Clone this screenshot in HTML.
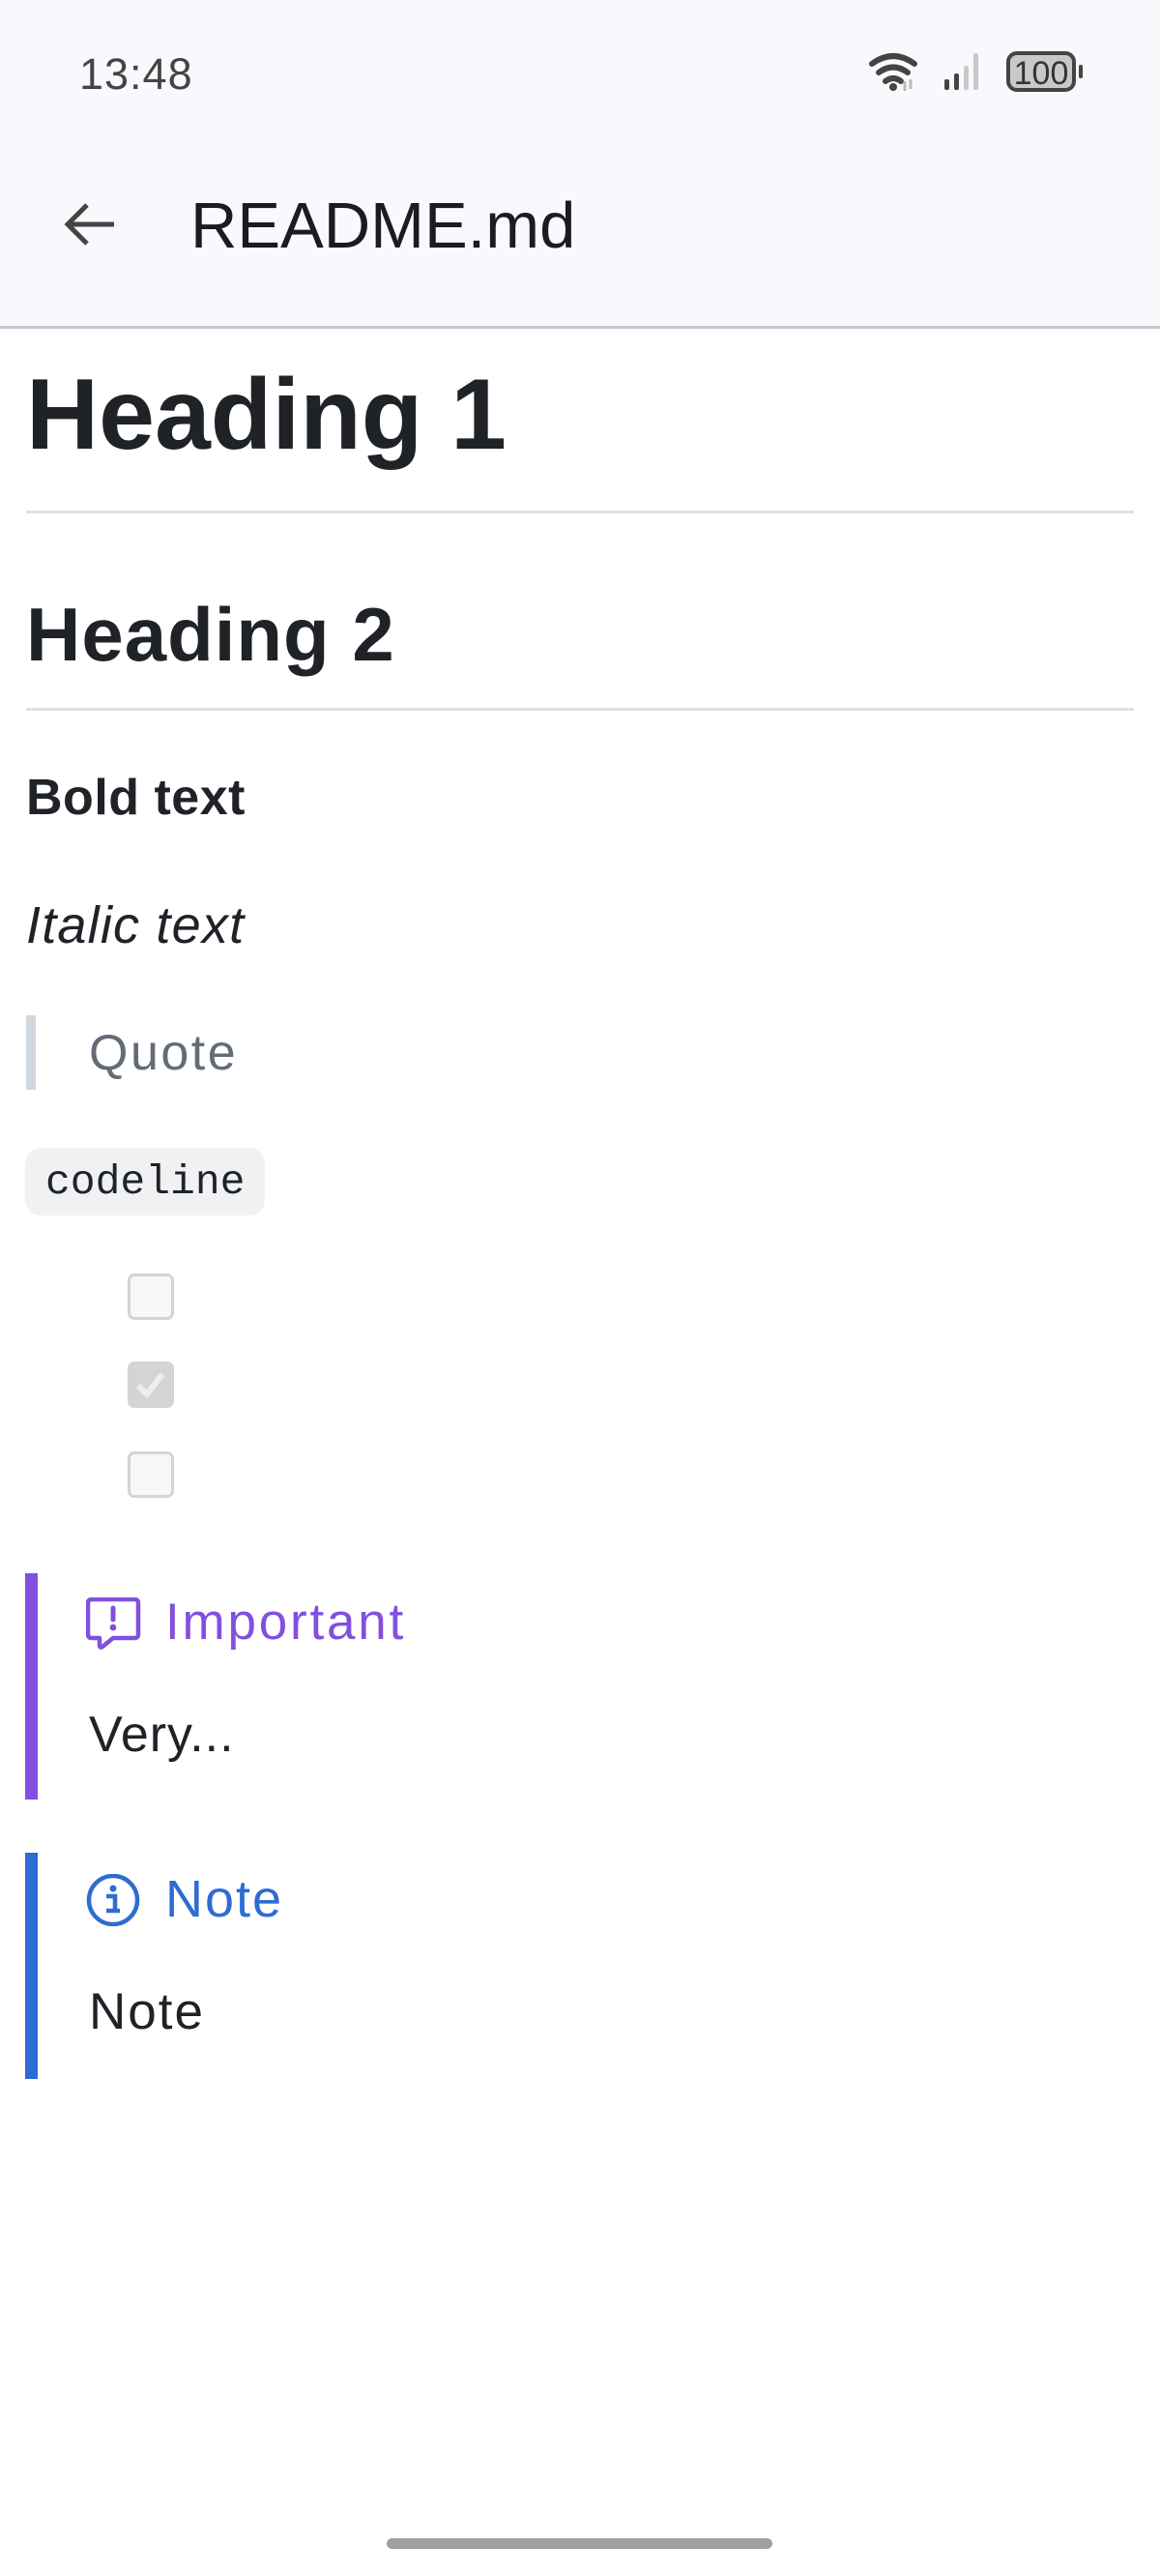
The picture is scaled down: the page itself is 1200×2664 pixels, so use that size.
<!DOCTYPE html>
<html><head><meta charset="utf-8"><style>
*{margin:0;padding:0;box-sizing:border-box}
body{width:1200px;height:2664px;background:#fff;position:relative;overflow:hidden;font-family:"Liberation Sans",sans-serif;color:#1f2328}
.a{position:absolute;line-height:1;white-space:nowrap}
.hr{position:absolute;left:27px;width:1146px;height:3px;background:#dfe2e5}
.cb{position:absolute;left:132px;width:48px;height:48px;border:3px solid #d4d4d4;background:#f7f7f7;border-radius:7px}
</style></head><body>
<div style="position:absolute;left:0;top:0;width:1200px;height:337px;background:#f9f8fd"></div>
<div style="position:absolute;left:0;top:337px;width:1200px;height:3px;background:#c5c4cc"></div>
<div class="a" style="left:82px;top:54px;font-size:45px;color:#444;letter-spacing:1px">13:48</div>
<svg style="position:absolute;left:896px;top:50px" width="230" height="48" viewBox="0 0 230 48">
<path d="M6 16 Q28 0 50 16" fill="none" stroke="#444" stroke-width="6" stroke-linecap="round"/>
<path d="M13 25 Q28 14 43 25" fill="none" stroke="#444" stroke-width="6" stroke-linecap="round"/>
<path d="M20 34 Q28 28 36 34" fill="none" stroke="#444" stroke-width="6" stroke-linecap="round"/>
<circle cx="28" cy="40" r="4" fill="#444"/>
<path d="M40 44 V34 M46 32 V42" stroke="#bbb" stroke-width="3"/>
<rect x="81" y="32" width="5" height="11" rx="2" fill="#444"/>
<rect x="91" y="26" width="5" height="17" rx="2" fill="#444"/>
<rect x="101" y="18" width="5" height="25" rx="2" fill="#c8c8c8"/>
<rect x="111" y="5" width="5" height="38" rx="2" fill="#c8c8c8"/>
<rect x="147" y="5" width="68" height="38" rx="9" fill="#c8c8c8" stroke="#444" stroke-width="4"/>
<rect x="220" y="17" width="4" height="14" rx="2" fill="#444"/>
<text x="181" y="37" text-anchor="middle" font-family="Liberation Sans" font-size="34" fill="#333">100</text>
</svg>
<svg style="position:absolute;left:62px;top:202px" width="60" height="60" viewBox="0 0 60 60">
<path d="M56 30 H8 M28 10 L8 30 L28 50" fill="none" stroke="#444" stroke-width="5"/>
</svg>
<div class="a" style="left:197px;top:200px;font-size:67px;color:#1c1b1f">README.md</div>

<div class="a" style="left:27px;top:377px;font-size:104px;font-weight:bold">Heading 1</div>
<div class="hr" style="top:528px"></div>
<div class="a" style="left:27px;top:617px;font-size:78px;font-weight:bold;letter-spacing:1px">Heading 2</div>
<div class="hr" style="top:732px"></div>
<div class="a" style="left:27px;top:799px;font-size:52px;font-weight:bold;letter-spacing:0.5px">Bold text</div>
<div class="a" style="left:27px;top:930px;font-size:54px;font-style:italic;letter-spacing:1.2px">Italic text</div>
<div style="position:absolute;left:27px;top:1050px;width:10px;height:77px;background:#d0d7de"></div>
<div class="a" style="left:92px;top:1063px;font-size:52px;color:#636c76;letter-spacing:2.5px">Quote</div>
<div style="position:absolute;left:26px;top:1187px;width:248px;height:70px;background:#eff1f3;border-radius:16px;font-family:'Liberation Mono',monospace;font-size:43px;display:flex;align-items:center;padding-left:21px">codeline</div>
<div class="cb" style="top:1317px"></div>
<div class="cb" style="top:1408px;background:#d4d4d4"><svg width="42" height="42" viewBox="0 0 42 42" style="position:absolute;left:0;top:0"><path d="M8 22 L17 31 L33 10" fill="none" stroke="#eee" stroke-width="6"/></svg></div>
<div class="cb" style="top:1501px"></div>

<div style="position:absolute;left:26px;top:1627px;width:13px;height:234px;background:#8250df"></div>
<svg style="position:absolute;left:89px;top:1652px" width="58" height="54" viewBox="0 0 58 54">
<path d="M6 2 H50 Q54 2 54 6 V38 Q54 42 50 42 H28 L17 51 Q14 53 14 49 V42 H6 Q2 42 2 38 V6 Q2 2 6 2 Z" fill="none" stroke="#8250df" stroke-width="4.5" stroke-linejoin="round"/>
<path d="M28 11 V23" stroke="#8250df" stroke-width="5" stroke-linecap="round"/><circle cx="28" cy="31" r="3.4" fill="#8250df"/>
</svg>
<div class="a" style="left:171px;top:1651px;font-size:53px;color:#8250df;letter-spacing:2.8px">Important</div>
<div class="a" style="left:92px;top:1768px;font-size:52px;letter-spacing:1px">Very...</div>

<div style="position:absolute;left:26px;top:1916px;width:13px;height:234px;background:#2f6bd1"></div>
<svg style="position:absolute;left:89px;top:1938px" width="58" height="54" viewBox="0 0 58 54">
<circle cx="28" cy="27" r="25" fill="none" stroke="#2f6bd1" stroke-width="4.5"/>
<circle cx="28" cy="15" r="3.5" fill="#2f6bd1"/><path d="M21 23 H30 V37 M21 38 H35" fill="none" stroke="#2f6bd1" stroke-width="4.5"/>
</svg>
<div class="a" style="left:171px;top:1937px;font-size:54px;color:#2f6bd1;letter-spacing:2px">Note</div>
<div class="a" style="left:92px;top:2054px;font-size:53px;letter-spacing:2px">Note</div>

<div style="position:absolute;left:400px;top:2625px;width:399px;height:11px;border-radius:6px;background:#a0a0a0"></div>
</body></html>
